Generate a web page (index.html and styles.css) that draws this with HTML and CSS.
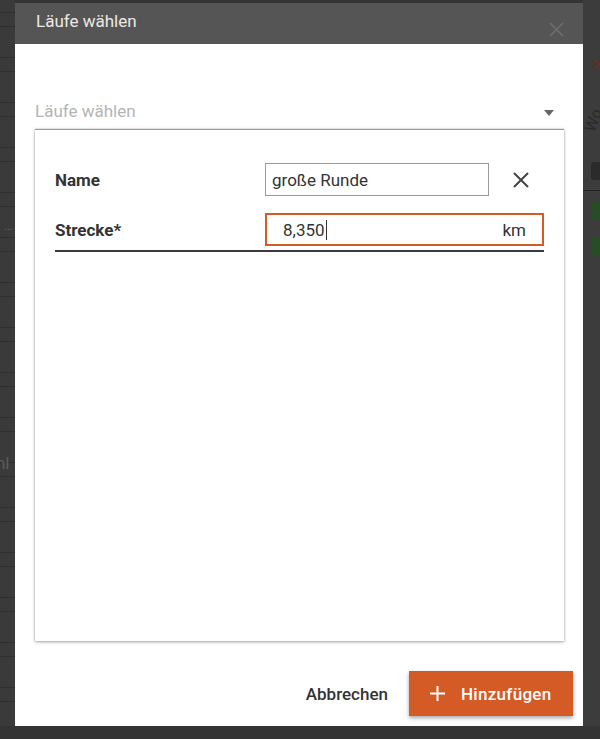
FILE: index.html
```html
<!DOCTYPE html>
<html lang="de">
<head>
    <meta charset="UTF-8">
    <meta name="viewport" content="width=device-width, initial-scale=1.0">
    <title>Läufe wählen</title>
    <link rel="stylesheet" href="styles.css">
</head>
<body>

<div class="backdrop">
    <!-- Seite im Hintergrund (abgedunkelt) -->
    <div class="bg-left">
        <span class="bg-dots">…</span>
        <span class="bg-text">hl</span>
    </div>

    <div class="dialog">
        <header class="dialog-header">
            <h1>Läufe wählen</h1>
            <span class="header-close">
                <svg width="15" height="15" viewBox="0 0 15 15"><path d="M1 1 L14 14 M14 1 L1 14" stroke="#6e6e6e" stroke-width="1.6" fill="none"/></svg>
            </span>
        </header>

        <div class="dialog-body">
            <div class="select-field">
                <span class="select-placeholder">Läufe wählen</span>
                <span class="select-arrow"></span>
            </div>

            <div class="run-card">
                <div class="run-form">
                    <label class="run-label">Name</label>
                    <div class="run-field">
                        <input type="text" class="name-input" value="große Runde">
                        <span class="remove-run">
                            <svg width="18" height="18" viewBox="0 0 18 18"><path d="M2 2 L16 16 M16 2 L2 16" stroke="#444" stroke-width="2" fill="none"/></svg>
                        </span>
                    </div>

                    <label class="run-label">Strecke*</label>
                    <div class="distance-input">
                        <span class="distance-value">8,350<span class="caret"></span></span>
                        <span class="distance-unit">km</span>
                    </div>
                </div>
                <div class="run-divider"></div>
            </div>
        </div>

        <footer class="dialog-footer">
            <button class="btn-cancel">Abbrechen</button>
            <button class="btn-add">
                <svg width="15" height="15" viewBox="0 0 15 15"><path d="M7.5 0 V15 M0 7.5 H15" stroke="#fff" stroke-width="2" fill="none"/></svg>
                Hinzufügen
            </button>
        </footer>
    </div>

    <div class="bg-right">
        <span class="bg-x">✕</span>
        <span class="bg-head">Wo</span>
        <span class="bg-check dark"></span>
        <span class="bg-line"></span>
        <span class="bg-check"></span>
        <span class="bg-check"></span>
    </div>
</div>

</body>
</html>
```

FILE: styles.css
```css
body {
    margin: 0;
    height: 739px;
    overflow: hidden;
    background-color: #343434;
    font-family: Roboto, "Liberation Sans", sans-serif;
}

.backdrop {
    display: flex;
    align-items: flex-start;
    height: 739px;
}

/* Hintergrund links */
.bg-left {
    width: 15px;
    height: 726px;
    display: flex;
    flex-direction: column;
    overflow: hidden;
    background-color: #3a3a3a;
    background-image: repeating-linear-gradient(to bottom,
        transparent 0 12px, #2f2f2f 12px 13px,
        transparent 13px 26px, #2f2f2f 26px 27px,
        transparent 27px 45px);
    color: #5a5a5a;
    font-size: 13px;
}

.bg-dots {
    margin-top: 218px;
    padding-left: 4px;
}

.bg-text {
    margin-top: 220px;
    font-size: 17px;
    margin-left: -4px;
}

/* Dialog */
.dialog {
    width: 568px;
    height: 723px;
    margin-top: 3px;
    display: flex;
    flex-direction: column;
    background-color: white;
}

.dialog-header {
    height: 41px;
    display: flex;
    justify-content: space-between;
    background-color: #555555;
    padding: 0 19px 0 21px;
}

.dialog-header h1 {
    margin: 0;
    font-size: 17px;
    font-weight: 400;
    line-height: 36px;
    color: #ece9e4;
}

.header-close {
    align-self: flex-end;
    margin-bottom: 7px;
    height: 15px;
}

.dialog-body {
    flex: 1;
    display: flex;
    flex-direction: column;
    padding: 0 19px 0 20px;
}

.select-field {
    margin-top: 57px;
    height: 20px;
    padding-bottom: 8px;
    display: flex;
    justify-content: space-between;
    align-items: center;
}

.select-placeholder {
    font-size: 17px;
    color: #b4b4b4;
}

.select-arrow {
    width: 0;
    height: 0;
    margin-right: 10px;
    margin-top: 3px;
    border-left: 5.5px solid transparent;
    border-right: 5.5px solid transparent;
    border-top: 6px solid #666;
}

.run-card {
    flex: 1;
    border-top: 1px solid #9c9c9c;
    box-shadow: 0 1px 3px rgba(0, 0, 0, 0.35), 0 0 1px rgba(0, 0, 0, 0.25);
    padding: 33px 20px 0 20px;
}

.run-form {
    display: grid;
    grid-template-columns: 210px 1fr;
    grid-auto-rows: 33px;
    row-gap: 17px;
    align-items: center;
}

.run-label {
    font-size: 17px;
    font-weight: 700;
    color: #333;
}

.run-field {
    display: flex;
    align-items: center;
    height: 33px;
}

.name-input {
    width: 224px;
    height: 33px;
    box-sizing: border-box;
    border: 1px solid #9a9a9a;
    padding: 0 6px;
    font-family: Roboto, "Liberation Sans", sans-serif;
    font-size: 17px;
    color: #333;
    outline: none;
}

.remove-run {
    margin-left: 23px;
    height: 18px;
}

.distance-input {
    height: 33px;
    box-sizing: border-box;
    border: 2px solid #d45b26;
    padding: 0 16px;
    display: flex;
    justify-content: space-between;
    align-items: center;
    font-size: 17px;
    color: #333;
}

.distance-value {
    display: flex;
    align-items: center;
}

.caret {
    display: inline-block;
    width: 1px;
    height: 20px;
    background-color: #333;
    margin-left: 1px;
}

.run-divider {
    margin-top: 4px;
    height: 2px;
    background-color: #3c3c3c;
}

.dialog-footer {
    display: flex;
    justify-content: flex-end;
    align-items: center;
    padding: 30px 10px 10px 0;
}

.btn-cancel {
    margin-right: 21px;
    border: none;
    background: none;
    padding: 0;
    font-family: Roboto, "Liberation Sans", sans-serif;
    font-size: 17px;
    font-weight: 500;
    color: #333;
    cursor: pointer;
}

.btn-add {
    width: 164px;
    height: 45px;
    display: flex;
    align-items: center;
    gap: 16px;
    padding: 0 0 0 21px;
    border: none;
    background-color: #d45b26;
    box-shadow: 0 2px 4px rgba(0, 0, 0, 0.35);
    font-family: Roboto, "Liberation Sans", sans-serif;
    font-size: 17px;
    font-weight: 500;
    letter-spacing: 0.3px;
    color: white;
    cursor: pointer;
}

/* Hintergrund rechts */
.bg-right {
    flex: 1;
    height: 726px;
    display: flex;
    flex-direction: column;
    background-color: #3c3c3c;
    overflow: hidden;
}

.bg-x {
    margin-top: 55px;
    margin-left: 8px;
    color: #6e2a2a;
    font-size: 16px;
}

.bg-head {
    margin-top: 40px;
    margin-left: 1px;
    transform: rotate(-70deg);
    color: #2a2a2a;
    font-size: 16px;
}

.bg-check {
    width: 16px;
    height: 18px;
    margin-left: 8px;
    margin-top: 17px;
    border-radius: 3px;
    background-color: #264d24;
}

.bg-check.dark {
    margin-top: 29px;
    background-color: #2b2b2b;
}

.bg-line {
    height: 1px;
    margin-top: 10px;
    margin-bottom: -6px;
    background-color: #262626;
}
```
